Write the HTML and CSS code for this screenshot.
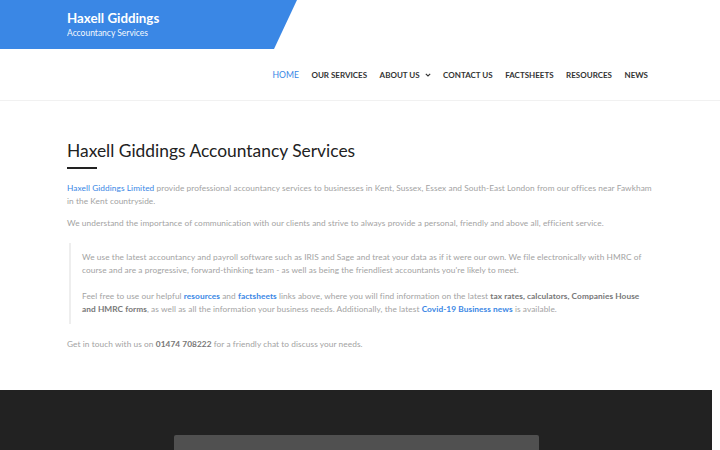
FILE: index.html
```html
<!DOCTYPE html>
<html lang="en">
<head>
<meta charset="UTF-8">
<meta name="viewport" content="width=device-width, initial-scale=1.0">
<title>Haxell Giddings Accountancy Services</title>
<link rel="stylesheet" href="styles.css">
</head>
<body>
<header class="site-header">
  <div class="brand">
    <div class="brand-inner">
      <div class="brand-name">Haxell Giddings</div>
      <div class="brand-tag">Accountancy Services</div>
    </div>
  </div>
  <nav class="main-nav">
    <a href="#" class="active">HOME</a>
    <a href="#">OUR SERVICES</a>
    <a href="#" class="has-sub">ABOUT US
      <svg width="6" height="4" viewBox="0 0 6 4"><path d="M0.8 0.8 L3 3 L5.2 0.8" fill="none" stroke="#333" stroke-width="1.1"/></svg>
    </a>
    <a href="#">CONTACT US</a>
    <a href="#">FACTSHEETS</a>
    <a href="#">RESOURCES</a>
    <a href="#">NEWS</a>
  </nav>
</header>

<main class="content">
  <h1>Haxell Giddings Accountancy Services</h1>
  <div class="title-rule"></div>
  <p><a href="#">Haxell Giddings Limited</a> provide professional accountancy services to businesses in Kent, Sussex, Essex and South-East London from our offices near Fawkham in the Kent countryside.</p>
  <p>We understand the importance of communication with our clients and strive to always provide a personal, friendly and above all, efficient service.</p>
  <blockquote>
    <p>We use the latest accountancy and payroll software such as IRIS and Sage and treat your data as if it were our own. We file electronically with HMRC of course and are a progressive, forward-thinking team - as well as being the friendliest accountants you're likely to meet.</p>
    <p>Feel free to use our helpful <a href="#"><b>resources</b></a> and <a href="#"><b>factsheets</b></a> links above, where you will find information on the latest <b>tax rates, calculators, Companies House and HMRC forms</b>, as well as all the information your business needs. Additionally, the latest <a href="#"><b>Covid-19 Business news</b></a> is available.</p>
  </blockquote>
  <p>Get in touch with us on <b>01474 708222</b> for a friendly chat to discuss your needs.</p>
</main>

<footer class="site-footer">
  <div class="footer-box"></div>
</footer>
</body>
</html>
```

FILE: styles.css
```css
body { margin: 0; font-family: Lato, "Open Sans", sans-serif; background: #fff; color: #a3a3a3; }
a { text-decoration: none; color: #3a87e5; }

.site-header { height: 100px; border-bottom: 1px solid #f1f1f1; display: flex; flex-direction: column; }
.brand { width: 297px; height: 49px; background: #3a87e5; clip-path: polygon(0 0, 100% 0, calc(100% - 23px) 100%, 0 100%); }
.brand-inner { padding: 10px 0 0 67px; color: #fff; }
.brand-name { font-size: 13.3px; font-weight: 700; line-height: 16px; }
.brand-tag { font-size: 8.5px; line-height: 14px; opacity: 0.95; }

.main-nav { flex: 1; display: flex; justify-content: flex-end; align-items: center; gap: 12.5px; padding-right: 72px; font-size: 8px; font-weight: 700; }
.main-nav a { color: #333; }
.main-nav a.active { color: #3a87e5; font-weight: 400; font-size: 8.6px; }
.main-nav .has-sub svg { margin-left: 3px; vertical-align: 1px; }

.content { margin: 0 64px 0 67px; padding: 39px 0 30px; font-size: 8.3px; line-height: 13px; letter-spacing: 0.07px; }
.content h1 { margin: 0; font-size: 17.4px; font-weight: 400; color: #222; line-height: 22px; letter-spacing: 0; }
.title-rule { width: 30px; height: 2px; background: #222; margin: 5px 0 13px; }
.content p { margin: 0 0 9px; }
.content b { color: #777; }
.content a b { color: #3a87e5; }
blockquote { margin: 13px 0 14px 2px; border-left: 2px solid #eee; padding: 8px 12px 8px 11px; }
.content blockquote p { margin-bottom: 13px; }
.content blockquote p:last-child { margin-bottom: 0; }

.site-footer { background: #222; margin-right: 8px; height: 120px; padding-top: 45px; box-sizing: border-box; }
.footer-box { width: 365px; height: 60px; margin-left: 174px; background: #505050; border-radius: 2px; }
```
